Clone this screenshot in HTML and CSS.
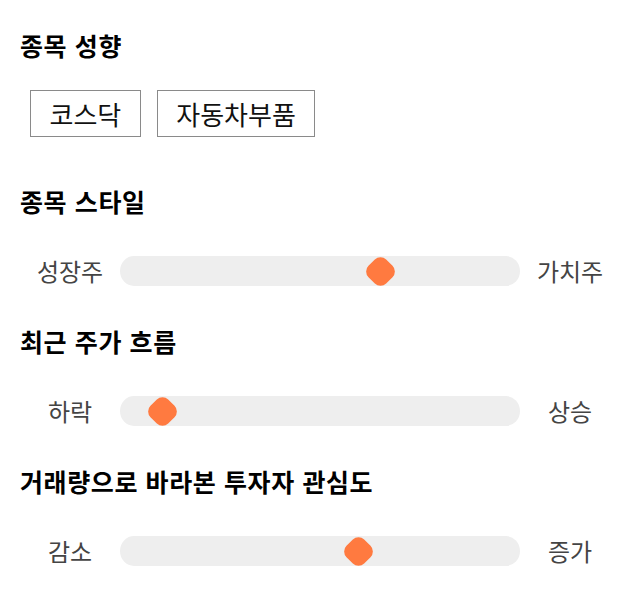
FILE: index.html
```html
<!DOCTYPE html>
<html lang="ko">
<head>
<meta charset="utf-8">
<link rel="stylesheet" href="styles.css">
</head>
<body>
<main class="panel">
  <section class="group">
    <h2 class="title">종목 성향</h2>
    <div class="tags">
      <span class="tag">코스닥</span>
      <span class="tag">자동차부품</span>
    </div>
  </section>
  <section class="group">
    <h2 class="title">종목 스타일</h2>
    <div class="scale">
      <span class="end">성장주</span>
      <div class="track"><span class="thumb" style="left: 65%"></span></div>
      <span class="end">가치주</span>
    </div>
  </section>
  <section class="group">
    <h2 class="title">최근 주가 흐름</h2>
    <div class="scale">
      <span class="end">하락</span>
      <div class="track"><span class="thumb" style="left: 10.5%"></span></div>
      <span class="end">상승</span>
    </div>
  </section>
  <section class="group">
    <h2 class="title">거래량으로 바라본 투자자 관심도</h2>
    <div class="scale">
      <span class="end">감소</span>
      <div class="track"><span class="thumb" style="left: 59.5%"></span></div>
      <span class="end">증가</span>
    </div>
  </section>
</main>
</body>
</html>
```
FILE: styles.css
```css
html, body {
  margin: 0;
  padding: 0;
  background: #fff;
}
body {
  font-family: "Noto Sans CJK KR", "Noto Sans", sans-serif;
  color: #000;
}
.panel {
  padding: 30px 20px 0 20px;
  display: flex;
  flex-direction: column;
}
.title {
  margin: 0;
  font-size: 25px;
  font-weight: 700;
  line-height: 30px;
  letter-spacing: 0.6px;
}
.group + .group .title {
  margin-top: 40px;
}
.group:nth-child(2) .title {
  margin-top: 49px;
}
.tags {
  display: flex;
  gap: 16px;
  margin-top: 30px;
  padding-left: 10px;
}
.tag {
  border: 1px solid #8a8a8a;
  height: 45px;
  line-height: 45px;
  padding: 0 18.5px;
  font-size: 26px;
  color: #111;
}
.scale {
  display: flex;
  align-items: center;
  margin-top: 40px;
  height: 30px;
}
.end {
  width: 100px;
  text-align: center;
  font-size: 24px;
  color: #444;
  line-height: 30px;
}
.track {
  position: relative;
  width: 400px;
  height: 30px;
  background: #eeeeee;
  border-radius: 14px / 15px;
}
.thumb {
  position: absolute;
  top: 50%;
  width: 25px;
  height: 25px;
  margin: -12.5px 0 0 -12.5px;
  background: #ff7a40;
  border-radius: 8px;
  transform: rotate(45deg);
}
```
